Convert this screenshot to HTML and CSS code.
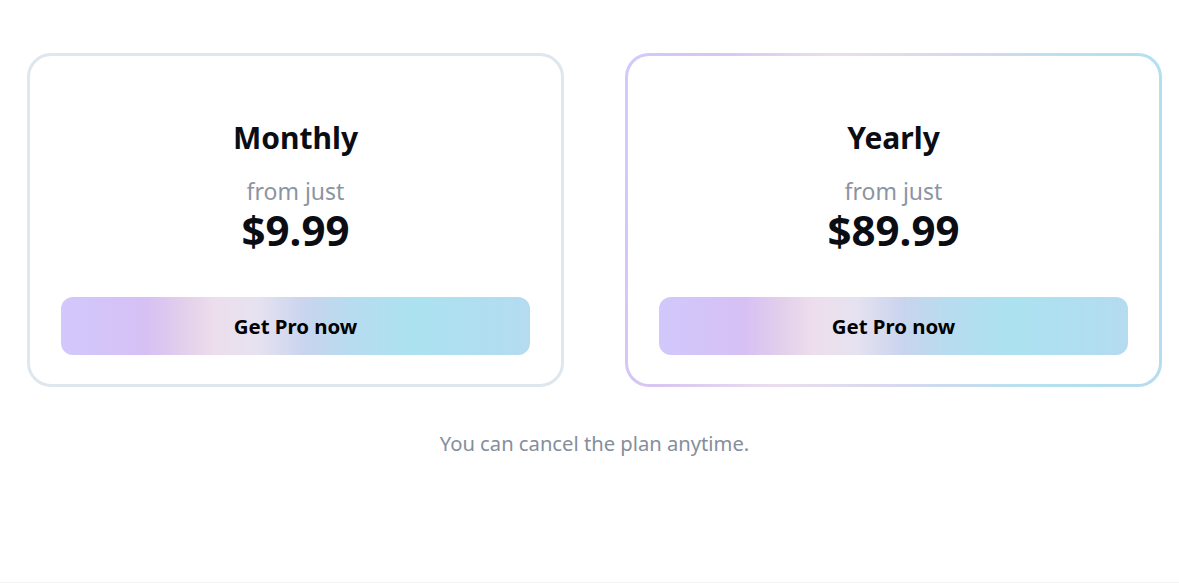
FILE: index.html
```html
<!DOCTYPE html>
<html lang="en">
<head>
    <meta charset="UTF-8">
    <meta name="viewport" content="width=device-width, initial-scale=1.0">
    <title>Pricing</title>
    <link rel="stylesheet" href="styles.css">
</head>
<body>
    <div class="page">
        <section class="plans">
            <div class="plan">
                <h2 class="plan-name">Monthly</h2>
                <p class="plan-from">from just</p>
                <p class="plan-price">$9.99</p>
                <button class="plan-btn">Get Pro now</button>
            </div>
            <div class="plan plan-featured">
                <h2 class="plan-name">Yearly</h2>
                <p class="plan-from">from just</p>
                <p class="plan-price">$89.99</p>
                <button class="plan-btn">Get Pro now</button>
            </div>
        </section>
        <p class="note">You can cancel the plan anytime.</p>
    </div>
</body>
</html>
```

FILE: styles.css
```css
body {
    margin: 0;
    padding: 0;
    background-color: white;
    font-family: "Noto Sans", "Open Sans", sans-serif;
    color: #0b0d14;
}

.page {
    height: 583px;
    border-bottom: 1px solid #f2f2f2;
    padding: 53px 17px 0 27px;
    box-sizing: border-box;
}

.plans {
    display: flex;
    gap: 61px;
}

.plan {
    flex: 1;
    border: 3px solid #dfe7ee;
    border-radius: 24px;
    padding: 62px 31px 29px;
    display: flex;
    flex-direction: column;
    align-items: center;
    background-color: white;
}

.plan-featured {
    border-color: transparent;
    background: linear-gradient(white, white) padding-box,
        linear-gradient(100deg, #d2cafc 0%, #d8c4f2 15%, #eadeee 35%, #d8d8ee 55%, #b4e2ee 80%, #b6dcee 100%) border-box;
}

.plan-name {
    margin: 0;
    font-size: 30px;
    font-weight: 700;
    line-height: 40px;
}

.plan-from {
    margin: 19px 0 0;
    font-size: 23px;
    line-height: 28px;
    color: #8c94a2;
}

.plan-price {
    margin: 0;
    font-size: 42px;
    font-weight: 700;
    line-height: 50px;
}

.plan-btn {
    margin-top: 42px;
    width: 100%;
    height: 58px;
    border: none;
    border-radius: 12px;
    font-family: inherit;
    font-size: 20.4px;
    font-weight: 700;
    color: #000;
    background: linear-gradient(90deg, #d1c8fc 0%, #d6c0f4 18%, #e2cfeb 26%, #eddeec 33%, #e6e2f0 42%, #c9d4ee 52%, #b7dcef 62%, #ace2f0 75%, #b0def0 90%, #b5dbf0 100%);
}

.note {
    margin: 42px 0 0;
    text-align: center;
    font-size: 20.2px;
    color: #858e9b;
}
```
